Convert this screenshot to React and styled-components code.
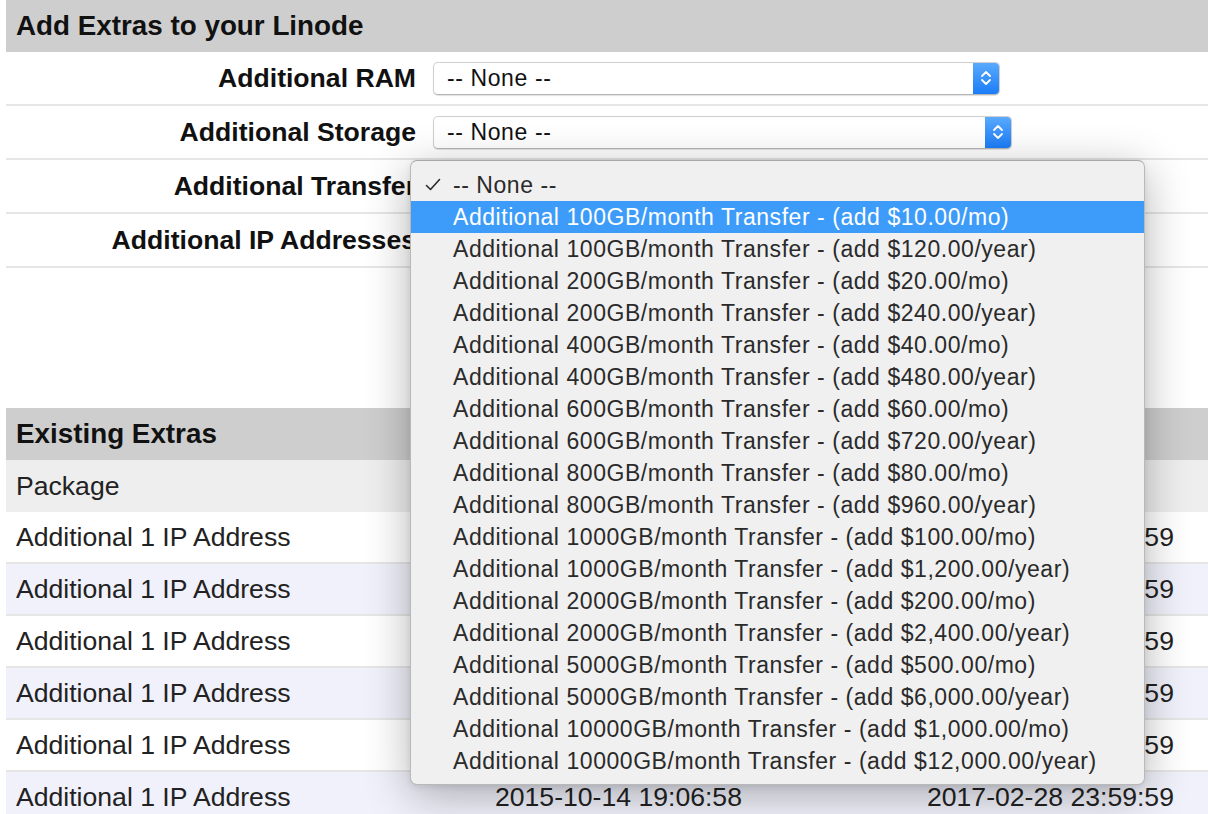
import React from 'react';
import styled, { createGlobalStyle } from 'styled-components';

const GlobalStyle = createGlobalStyle`
  html, body {
    margin: 0;
    padding: 0;
    background: #ffffff;
    overflow: hidden;
  }
  body {
    font-family: 'Liberation Sans', Arial, Helvetica, sans-serif;
    color: #111;
  }
`

const Page = styled.div`
  position: relative;
  height: 814px;
  padding-left: 6px;
  overflow: hidden;
`

const SectionTitle = styled.div`
  height: 52px;
  display: flex;
  align-items: center;
  padding-left: 10px;
  background: #cecece;
  font-weight: bold;
  font-size: 27.8px;
  color: #111;
`

const FormRow = styled.div`
  height: 52px;
  display: grid;
  grid-template-columns: 410px 1fr;
  column-gap: 17px;
  align-items: center;
  border-bottom: 2px solid #e6e6e6;
`

const FieldLabel = styled.div`
  text-align: right;
  font-weight: bold;
  font-size: 26.6px;
  color: #111;
  white-space: nowrap;
`

const SelectBox = styled.div`
  width: ${p => p.$width}px;
  height: 33px;
  box-sizing: border-box;
  display: flex;
  align-items: stretch;
  background: #fff;
  border: 1px solid #cfcfcf;
  border-bottom-color: #b5b5b5;
  border-radius: 5px;
  box-shadow: 0 1px 1px rgba(0, 0, 0, 0.12);
  overflow: hidden;
`

const SelectValue = styled.div`
  flex: 1;
  display: flex;
  align-items: center;
  padding-left: 13px;
  font-size: 23px;
  letter-spacing: 0.6px;
  color: #111;
`

const Stepper = styled.div`
  width: 26px;
  display: flex;
  align-items: center;
  justify-content: center;
  background: linear-gradient(#5aaafc, #1b7cf8);
`

const Spacer = styled.div`
  height: 140px;
`

const TableRow = styled.div`
  height: ${p => (p.$head ? 52 : 50)}px;
  display: grid;
  grid-template-columns: 489px 432px 1fr;
  align-items: center;
  background: ${p => (p.$head ? '#eeeeee' : p.$alt ? '#f1f1fb' : '#ffffff')};
  border-bottom: ${p => (p.$head ? 'none' : '2px solid #e6e6e6')};
  font-size: 26.6px;
  color: #222;
`

const Cell = styled.div`
  padding-left: ${p => (p.$first ? 10 : 0)}px;
  white-space: nowrap;
`

const Menu = styled.div`
  position: absolute;
  left: 410px;
  top: 160px;
  width: 735px;
  box-sizing: border-box;
  padding: 8px 0 7px;
  background: #f0f0f0;
  border: 1px solid #b9b9b9;
  border-top-color: #a8a8a8;
  border-radius: 7px;
  box-shadow: 0 10px 45px rgba(0, 0, 0, 0.3), 0 2px 6px rgba(0, 0, 0, 0.08);
  z-index: 5;
`

const MenuItem = styled.div`
  height: 32px;
  display: flex;
  align-items: center;
  padding-left: 42px;
  position: relative;
  font-size: 23px;
  letter-spacing: 0.55px;
  color: ${p => (p.$active ? '#ffffff' : '#2a2a2a')};
  background: ${p => (p.$active ? '#3d9cf9' : 'transparent')};
  white-space: nowrap;
`

const Check = styled.svg`
  position: absolute;
  left: 14px;
  top: 9px;
`

const UpDown = () => (
  <svg width="12" height="20" viewBox="0 0 12 20">
    <path d="M2 8 L6 4 L10 8" fill="none" stroke="#fff" strokeWidth="1.8" strokeLinecap="round" strokeLinejoin="round" />
    <path d="M2 12 L6 16 L10 12" fill="none" stroke="#fff" strokeWidth="1.8" strokeLinecap="round" strokeLinejoin="round" />
  </svg>
);

const fields = [
  { label: 'Additional RAM', width: 567 },
  { label: 'Additional Storage', width: 579 },
  { label: 'Additional Transfer', width: 579 },
  { label: 'Additional IP Addresses', width: 579 },
];

const tiers = [
  ['100', '$10.00', '$120.00'],
  ['200', '$20.00', '$240.00'],
  ['400', '$40.00', '$480.00'],
  ['600', '$60.00', '$720.00'],
  ['800', '$80.00', '$960.00'],
  ['1000', '$100.00', '$1,200.00'],
  ['2000', '$200.00', '$2,400.00'],
  ['5000', '$500.00', '$6,000.00'],
  ['10000', '$1,000.00', '$12,000.00'],
];

const options = tiers.flatMap(([gb, mo, yr]) => [
  `Additional ${gb}GB/month Transfer - (add ${mo}/mo)`,
  `Additional ${gb}GB/month Transfer - (add ${yr}/year)`,
]);

const extras = Array.from({ length: 6 }, () => ({
  name: 'Additional 1 IP Address',
  added: '2015-10-14 19:06:58',
  expires: '2017-02-28 23:59:59',
}));

const App = () => (
  <Page>
    <GlobalStyle />
    <SectionTitle>Add Extras to your Linode</SectionTitle>
    {fields.map(f => (
      <FormRow key={f.label}>
        <FieldLabel>{f.label}</FieldLabel>
        <div>
          <SelectBox $width={f.width}>
            <SelectValue>-- None --</SelectValue>
            <Stepper><UpDown /></Stepper>
          </SelectBox>
        </div>
      </FormRow>
    ))}
    <Spacer />
    <SectionTitle>Existing Extras</SectionTitle>
    <TableRow $head>
      <Cell $first>Package</Cell>
      <Cell>Date Added</Cell>
      <Cell>Expires</Cell>
    </TableRow>
    {extras.map((e, i) => (
      <TableRow key={i} $alt={i % 2 === 1}>
        <Cell $first>{e.name}</Cell>
        <Cell>{e.added}</Cell>
        <Cell>{e.expires}</Cell>
      </TableRow>
    ))}

    <Menu>
      <MenuItem>
        <Check width="16" height="14" viewBox="0 0 16 14">
          <path d="M1.5 7.5 L5.5 11.5 L14.5 1.5" fill="none" stroke="#2a2a2a" strokeWidth="1.6" strokeLinecap="round" strokeLinejoin="round" />
        </Check>
        -- None --
      </MenuItem>
      {options.map((o, i) => (
        <MenuItem key={o} $active={i === 0}>{o}</MenuItem>
      ))}
    </Menu>
  </Page>
);

export default App;
